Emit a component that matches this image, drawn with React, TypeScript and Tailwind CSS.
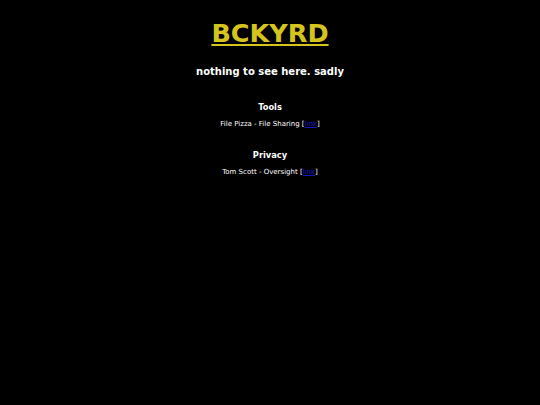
export default function App() {
  return (
    <div className="min-h-[405px] bg-black text-white text-center font-['DejaVu_Sans',Verdana,sans-serif]">
      <div className="pt-[16px]">
        <h1 className="text-[25.5px] font-bold leading-[34px] text-[#d4c41c] underline decoration-2 underline-offset-2">BCKYRD</h1>
        <h2 className="mt-[15px] text-[10px] font-bold leading-[14px]">nothing to see here. sadly</h2>
      </div>
      <section className="mt-[22px]">
        <h3 className="text-[8.3px] font-bold leading-[12px]">Tools</h3>
        <p className="mt-[6px] text-[7px] leading-[10px]">
          File Pizza - File Sharing [<a href="#" className="text-[#1414c8] underline">link</a>]
        </p>
      </section>
      <section className="mt-[20px]">
        <h3 className="text-[8.3px] font-bold leading-[12px]">Privacy</h3>
        <p className="mt-[6px] text-[7px] leading-[10px]">
          Tom Scott - Oversight [<a href="#" className="text-[#1414c8] underline">link</a>]
        </p>
      </section>
    </div>
  );
}
